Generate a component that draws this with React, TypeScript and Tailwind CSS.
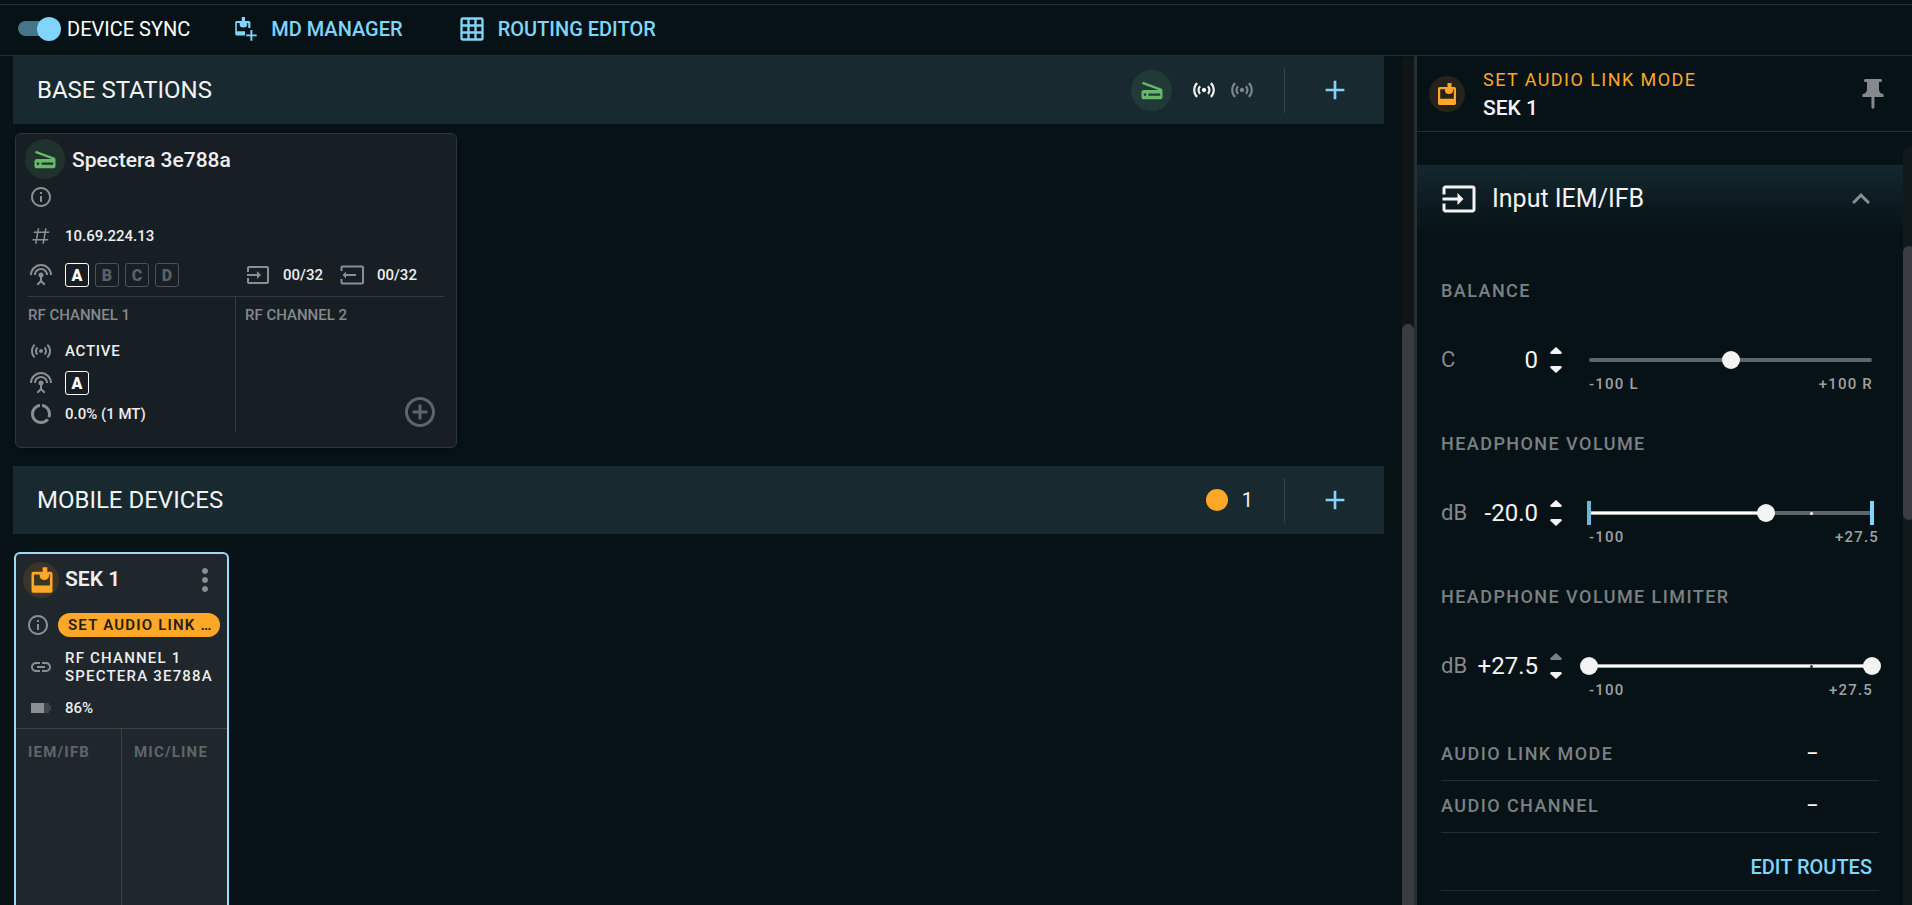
import React, { useState } from 'react';
import {
  MdAdd,
  MdAddCircleOutline,
  MdDataUsage,
  MdGridOn,
  MdInfoOutline,
  MdInput,
  MdKeyboardArrowUp,
  MdLink,
  MdMoreVert,
  MdPushPin,
  MdScanner,
  MdSensors,
  MdSettingsInputAntenna,
} from 'react-icons/md';

interface Control {
  id: string;
  label: string;
  unit: string;
  value: string;
  percent: number;
  minLabel: string;
  maxLabel: string;
  filled: boolean;
  bounds: boolean;
  zeroMark: boolean;
  double: boolean;
}

const controls: Control[] = [
  {
    id: 'balance',
    label: 'BALANCE',
    unit: 'C',
    value: '0',
    percent: 50,
    minLabel: '-100 L',
    maxLabel: '+100 R',
    filled: false,
    bounds: false,
    zeroMark: false,
    double: false,
  },
  {
    id: 'volume',
    label: 'HEADPHONE VOLUME',
    unit: 'dB',
    value: '-20.0',
    percent: 62.7,
    minLabel: '-100',
    maxLabel: '+27.5',
    filled: true,
    bounds: true,
    zeroMark: true,
    double: false,
  },
  {
    id: 'limiter',
    label: 'HEADPHONE VOLUME LIMITER',
    unit: 'dB',
    value: '+27.5',
    percent: 100,
    minLabel: '-100',
    maxLabel: '+27.5',
    filled: true,
    bounds: false,
    zeroMark: true,
    double: true,
  },
];

const rangeClass =
  'pointer-events-none absolute top-0 -left-[9px] h-6 w-[calc(100%+18px)] appearance-none bg-transparent [&::-webkit-slider-thumb]:pointer-events-auto [&::-webkit-slider-thumb]:size-[18px] [&::-webkit-slider-thumb]:appearance-none [&::-webkit-slider-thumb]:rounded-full [&::-webkit-slider-thumb]:bg-[#f3f3f3]';

function BodypackIcon({ className }: { className: string }) {
  return (
    <svg viewBox="0 0 24 24" fill="currentColor" className={className}>
      <path
        fillRule="evenodd"
        d="M12.5 1h4v4h2.700c1 0 1.800.8 1.800 1.800v14.400c0 1-.8 1.800-1.800 1.800H4.800C3.800 23 3 22.200 3 21.200V6.800C3 5.800 3.800 5 4.800 5h7.700zM5.200 7.200v9.600h13.600V7.200H18V8.500a4 3.500 0 0 1-8 0V7.200z"
      />
    </svg>
  );
}

function BodypackAddIcon({ className }: { className: string }) {
  return (
    <svg viewBox="0 0 24 24" fill="currentColor" className={className}>
      <path
        fillRule="evenodd"
        d="M9 1h3v3.500h3.500c1 0 1.500.7 1.500 1.500v5h-2V6.500h-1v1a3.500 3 0 0 1-7 0v-1H4.500V14H12v4H4.500C3.600 18 3 17.400 3 16.500V6c0-.9.6-1.500 1.500-1.500H9z"
      />
      <path d="M17 13h1.800v4h4v1.800h-4v4H17v-4h-4V17h4z" />
    </svg>
  );
}

function HashIcon({ className }: { className: string }) {
  return (
    <svg viewBox="0 0 24 24" fill="currentColor" className={className}>
      <path d="M5.410 20.500 6.120 17H2.500L2.850 15.300H6.400L7.400 8.700H3.900L4.200 7H7.800L8.500 3.500h1.700L9.500 7h6.300L16.500 3.500h1.700L17.500 7h3.700L20.900 8.700H17.200L16.200 15.300h3.700L19.600 17H15.900L15.200 20.500h-1.700L14.200 17H7.800L7.100 20.500zM9.200 8.700 8.100 15.300h6.400L15.500 8.700z" />
    </svg>
  );
}

function OutputIcon({ className }: { className: string }) {
  return (
    <svg viewBox="0 0 24 24" fill="currentColor" className={className}>
      <path d="M22 2.500H2.500C1.400 2.500.5 3.400.5 4.500V8h2V4.500H22v15H2.500V16h-2v3.500c0 1.100.9 2 2 2H22c1.100 0 2-.9 2-2v-15c0-1.100-.9-2-2-2z" />
      <path d="M6 8.500 2.500 12 6 15.500V13h10v-2H6z" />
    </svg>
  );
}

function BatteryIcon() {
  return (
    <svg viewBox="0 0 20 10" fill="currentColor" className="h-[10px] w-5">
      <path opacity="0.3" d="M13 0h5v2.500h2v5h-2V10h-5z" />
      <path d="M0 0h13v10H0z" />
    </svg>
  );
}

function AntennaBox({ name, active }: { name: string; active: boolean }) {
  return (
    <span
      className={
        active
          ? 'flex size-6 items-center justify-center rounded-[3px] border border-white pt-px text-base font-black text-white'
          : 'flex size-6 items-center justify-center rounded-[3px] border border-[#4d5457] pt-px text-base font-black text-[#5b6265]'
      }
    >
      {name}
    </span>
  );
}

function Toolbar() {
  const [sync, setSync] = useState(true);

  return (
    <header className="mt-1 flex h-[52px] shrink-0 items-center border-y border-[#242e31] pb-[3px] pl-[18px] text-xl">
      <label className="flex cursor-pointer items-center gap-[6px] text-white">
        <input
          type="checkbox"
          checked={sync}
          onChange={(e) => setSync(e.target.checked)}
          className="peer sr-only"
        />
        <span className="flex h-[15px] w-[43px] items-center rounded-full bg-linear-to-r from-[#467489] from-85% to-transparent to-85% peer-checked:justify-end">
          <span className="size-6 rounded-full bg-[#81d4fa]" />
        </span>
        DEVICE SYNC
      </label>
      <button
        type="button"
        className="ml-[42px] flex items-center gap-[13px] font-medium text-[#81d4fa]"
      >
        <BodypackAddIcon className="size-[26px]" />
        MD MANAGER
      </button>
      <button
        type="button"
        className="ml-[55px] flex items-center gap-3 font-medium text-[#81d4fa]"
      >
        <MdGridOn className="size-7" />
        ROUTING EDITOR
      </button>
    </header>
  );
}

function SectionBar({
  title,
  children,
}: {
  title: string;
  children: React.ReactNode;
}) {
  return (
    <div className="flex h-[68px] items-center bg-[#182930] pl-6">
      <h2 className="flex-1 text-2xl text-[#f3f3f3]">{title}</h2>
      {children}
      <span className="h-[45px] w-px bg-[#35444a]" />
      <button
        type="button"
        aria-label={`Add to ${title}`}
        className="flex h-full w-[99px] items-center justify-center text-[#81d4fa]"
      >
        <MdAdd className="size-8" />
      </button>
    </div>
  );
}

function BaseStationCard() {
  return (
    <article className="mt-[9px] ml-[2px] h-[315px] w-[442px] rounded-md border border-[#2f3738] bg-[#171e24] pt-[5px] pr-3 pl-3 text-[15px]/6 font-medium text-[#eeeeee] shadow-md">
      <div className="-ml-[3px] flex items-center gap-[7px]">
        <span className="flex size-10 items-center justify-center rounded-full bg-[#1f322d] text-[#66bb6a]">
          <MdScanner className="size-7" />
        </span>
        <h3 className="pt-px text-[21px]">Spectera 3e788a</h3>
      </div>
      <div className="mt-[6px] ml-px text-[#8a8f92]">
        <MdInfoOutline className="size-6" />
      </div>
      <div className="mt-[15px] ml-px flex items-center gap-3">
        <span className="flex w-6 justify-center text-[#8a8f92]">
          <HashIcon className="size-[22px]" />
        </span>
        <span>10.69.224.13</span>
      </div>
      <div className="mt-[15px] ml-px flex items-center">
        <MdSettingsInputAntenna className="size-6 text-[#8a8f92]" />
        <div className="ml-3 flex gap-[6px]">
          <AntennaBox name="A" active />
          <AntennaBox name="B" active={false} />
          <AntennaBox name="C" active={false} />
          <AntennaBox name="D" active={false} />
        </div>
        <MdInput className="ml-[67px] size-6 text-[#8a8f92]" />
        <span className="ml-[13px]">00/32</span>
        <OutputIcon className="ml-[17px] size-6 text-[#8a8f92]" />
        <span className="ml-[13px]">00/32</span>
      </div>
      <div className="mt-[9px] flex h-[136px] border-t border-[#333b40]">
        <div className="w-52 border-r border-[#333b40] pt-[6px]">
          <h4 className="text-[#858a8c]">RF CHANNEL 1</h4>
          <div className="mt-3 ml-px flex items-center gap-3">
            <MdSensors className="size-6 text-[#8a8f92]" />
            <span className="tracking-wider">ACTIVE</span>
          </div>
          <div className="mt-2 ml-px flex items-center gap-3">
            <MdSettingsInputAntenna className="size-6 text-[#8a8f92]" />
            <AntennaBox name="A" active />
          </div>
          <div className="mt-[7px] ml-px flex items-center gap-3">
            <MdDataUsage className="size-6 text-[#8a8f92]" />
            <span>0.0% (1 MT)</span>
          </div>
        </div>
        <div className="flex flex-1 flex-col justify-between pt-[6px] pr-[6px] pb-[2px] pl-[9px]">
          <h4 className="text-[#858a8c]">RF CHANNEL 2</h4>
          <button
            type="button"
            aria-label="Add RF channel"
            className="self-end text-[#5f6669]"
          >
            <MdAddCircleOutline className="size-9" />
          </button>
        </div>
      </div>
    </article>
  );
}

function MobileDeviceCard() {
  return (
    <article className="mt-[18px] ml-px flex w-[215px] flex-1 flex-col rounded-t-md border-2 border-b-0 border-[#9bdaf8] bg-[#1f262c] text-[15px] font-medium text-[#eeeeee]">
      <div className="mt-2 flex items-center pl-[7px]">
        <span className="flex size-9 items-center justify-center rounded-full bg-[#3a3429] pl-[2px] text-[#ffa726]">
          <BodypackIcon className="size-7" />
        </span>
        <h3 className="ml-[6px] flex-1 text-[21px] font-semibold">SEK 1</h3>
        <button type="button" aria-label="SEK 1 menu" className="mr-1 text-[#8a8f92]">
          <MdMoreVert className="size-9" />
        </button>
      </div>
      <div className="mt-[15px] flex items-center gap-2 pr-[7px] pl-[10px]">
        <MdInfoOutline className="size-6 shrink-0 text-[#8a8f92]" />
        <span className="flex-1 rounded-full bg-[#ffa726] pl-[10px] text-[15px]/6 font-semibold tracking-[0.08em] whitespace-nowrap text-[#241d12]">
          SET AUDIO LINK …
        </span>
      </div>
      <div className="mt-3 flex items-center gap-3 pl-[13px]">
        <MdLink className="size-6 text-[#8a8f92]" />
        <p className="text-[15px]/[18px] tracking-[0.08em]">
          RF CHANNEL 1
          <br />
          SPECTERA 3E788A
        </p>
      </div>
      <div className="mt-[11px] flex items-center gap-[14px] pl-[15px] text-[#8a8f92]">
        <BatteryIcon />
        <span className="leading-6 text-[#eeeeee]">86%</span>
      </div>
      <div className="mt-2 flex flex-1 border-t border-[#3d4142] leading-6 font-bold tracking-[0.08em] text-[#5f6668]">
        <div className="w-[106px] border-r border-[#3d4142] pt-[11px] pl-3">IEM/IFB</div>
        <div className="flex-1 pt-[11px] pl-3">MIC/LINE</div>
      </div>
    </article>
  );
}

function ControlRow({ control }: { control: Control }) {
  const [percent, setPercent] = useState(control.percent);
  const [value, setValue] = useState(control.value);

  return (
    <div>
      <label
        htmlFor={control.id}
        className="block text-lg/6 font-medium tracking-[0.08em] text-[#7b8183]"
      >
        {control.label}
      </label>
      <div className="mt-[45px] flex items-start">
        <span className="w-7 text-[22px]/6 text-[#83898c]">{control.unit}</span>
        <input
          id={control.id}
          type="text"
          value={value}
          onChange={(e) => setValue(e.target.value)}
          className="h-6 w-[69px] text-right text-2xl/6 text-[#f3f3f3] outline-none"
        />
        <div className="ml-3 flex h-6 flex-col justify-center gap-3 text-[#f3f3f3]">
          <button
            type="button"
            aria-label={`Increase ${control.label}`}
            className={control.double ? 'text-[#7b8183]' : 'text-[#f3f3f3]'}
          >
            <svg viewBox="0 0 12 7" fill="currentColor" className="h-[7px] w-3">
              <path d="M6 0l6 5.500-1 1.500H1L0 5.500z" />
            </svg>
          </button>
          <button type="button" aria-label={`Decrease ${control.label}`}>
            <svg viewBox="0 0 12 7" fill="currentColor" className="h-[7px] w-3">
              <path d="M6 7l6-5.500L11 0H1L0 1.500z" />
            </svg>
          </button>
        </div>
        <div className="ml-[27px] flex-1">
          <div className="relative mr-[7px] flex h-6 items-center">
            <div className="h-1 w-full rounded-full bg-[#5d6567]">
              {control.filled && (
                <div
                  className="h-1 rounded-full border-y border-[#a5a9aa] bg-white"
                  style={{ width: `${percent}%` }}
                />
              )}
            </div>
            {control.zeroMark && (
              <span
                className={
                  control.double
                    ? 'absolute left-[78%] size-[3px] rounded-full bg-[#2c3436]'
                    : 'absolute left-[78%] size-[3px] rounded-full bg-white'
                }
              />
            )}
            {control.bounds && (
              <>
                <span className="absolute -left-[2px] h-6 w-1 bg-[#6fb6d8]" />
                <span className="absolute -right-[2px] h-6 w-1 bg-[#81d4fa]" />
              </>
            )}
            {control.double && (
              <input
                type="range"
                aria-label={`${control.label} minimum`}
                defaultValue={0}
                className={rangeClass}
              />
            )}
            <input
              type="range"
              aria-label={control.label}
              step="any"
              value={percent}
              onChange={(e) => setPercent(Number(e.target.value))}
              className={rangeClass}
            />
          </div>
          <div
            className={
              control.bounds
                ? 'flex justify-between text-[15px]/6 font-medium tracking-[0.08em] text-[#9da1a3]'
                : 'mr-[6px] flex justify-between text-[15px]/6 font-medium tracking-[0.08em] text-[#9da1a3]'
            }
          >
            <span>{control.minLabel}</span>
            <span>{control.maxLabel}</span>
          </div>
        </div>
      </div>
    </div>
  );
}

function DetailPanel() {
  return (
    <aside className="flex w-[498px] shrink-0 flex-col border-l-3 border-[#263032]">
      <div className="flex h-[76px] shrink-0 items-center border-b border-[#242e31] pr-[21px] pl-3">
        <span className="flex size-9 items-center justify-center rounded-full bg-[#26241a] text-[#ffa726]">
          <BodypackIcon className="size-6" />
        </span>
        <div className="ml-[18px] flex-1">
          <p className="text-lg/7 tracking-[0.08em] text-[#ffa726]">SET AUDIO LINK MODE</p>
          <p className="text-[21px]/7 font-medium text-[#f3f3f3]">SEK 1</p>
        </div>
        <button type="button" aria-label="Pin panel" className="text-[#85898b]">
          <MdPushPin className="size-9" />
        </button>
      </div>
      <div className="flex min-h-0 flex-1">
        <div className="flex-1 overflow-hidden pt-[33px]">
          <button
            type="button"
            className="flex h-[68px] w-full items-center bg-linear-to-b from-[#14272f] to-[#071216] pr-6 pl-6"
          >
            <MdInput className="size-9 text-[#f3f3f3]" />
            <span className="ml-[15px] flex-1 text-left text-[25px] text-[#f3f3f3]">
              Input IEM/IFB
            </span>
            <MdKeyboardArrowUp className="size-9 text-[#8a8f92]" />
          </button>
          <div className="mt-[46px] flex flex-col gap-9 px-6">
            {controls.map((control) => (
              <ControlRow key={control.id} control={control} />
            ))}
          </div>
          <dl className="mx-6 mt-[27px] text-lg/6 font-medium">
            <div className="flex h-[52px] items-center border-b border-[#232d2f] pb-px">
              <dt className="flex-1 tracking-[0.08em] text-[#7b8183]">AUDIO LINK MODE</dt>
              <dd className="mr-[61px] text-[#f3f3f3]">–</dd>
            </div>
            <div className="flex h-[52px] items-center border-b border-[#232d2f] pb-px">
              <dt className="flex-1 tracking-[0.08em] text-[#7b8183]">AUDIO CHANNEL</dt>
              <dd className="mr-[61px] text-[#f3f3f3]">–</dd>
            </div>
          </dl>
          <div className="mx-6 flex h-[58px] items-center justify-end border-b border-[#232d2f] pt-[10px] pr-[7px]">
            <button type="button" className="text-xl font-medium text-[#81d4fa]">
              EDIT ROUTES
            </button>
          </div>
        </div>
        {/* Scroll bar */}
        <div className="mt-[15px] w-[9px] overflow-hidden rounded-tl-md bg-[#11191a]">
          <div className="mt-[99px] h-[274px] w-3 rounded-full bg-[#3b3c41]" />
        </div>
      </div>
    </aside>
  );
}

function App() {
  return (
    <div className="flex h-screen flex-col overflow-hidden bg-[#071216] font-[Roboto,sans-serif]">
      <Toolbar />
      <div className="flex min-h-0 flex-1">
        <main className="flex min-w-0 flex-1 flex-col pr-[18px] pl-[13px]">
          <SectionBar title="BASE STATIONS">
            <span className="flex size-[41px] items-center justify-center rounded-full bg-[#213a37] text-[#66bb6a]">
              <MdScanner className="size-7" />
            </span>
            <MdSensors className="ml-[19px] size-[26px] text-[#f3f3f3]" />
            <MdSensors className="mr-[29px] ml-3 size-[26px] text-[#7d878b]" />
          </SectionBar>
          <BaseStationCard />
          <div className="mt-[18px]">
            <SectionBar title="MOBILE DEVICES">
              <span className="size-[22px] rounded-full bg-[#ffa726]" />
              <span className="mr-[31px] ml-[14px] text-xl text-[#f3f3f3]">1</span>
            </SectionBar>
          </div>
          <MobileDeviceCard />
        </main>
        {/* Scroll bar */}
        <div className="w-3 shrink-0 rounded-t-full bg-[#101618]">
          <div className="mt-[268px] h-full rounded-t-full bg-[#3b3c41]" />
        </div>
        <DetailPanel />
      </div>
    </div>
  );
}

export default App;
